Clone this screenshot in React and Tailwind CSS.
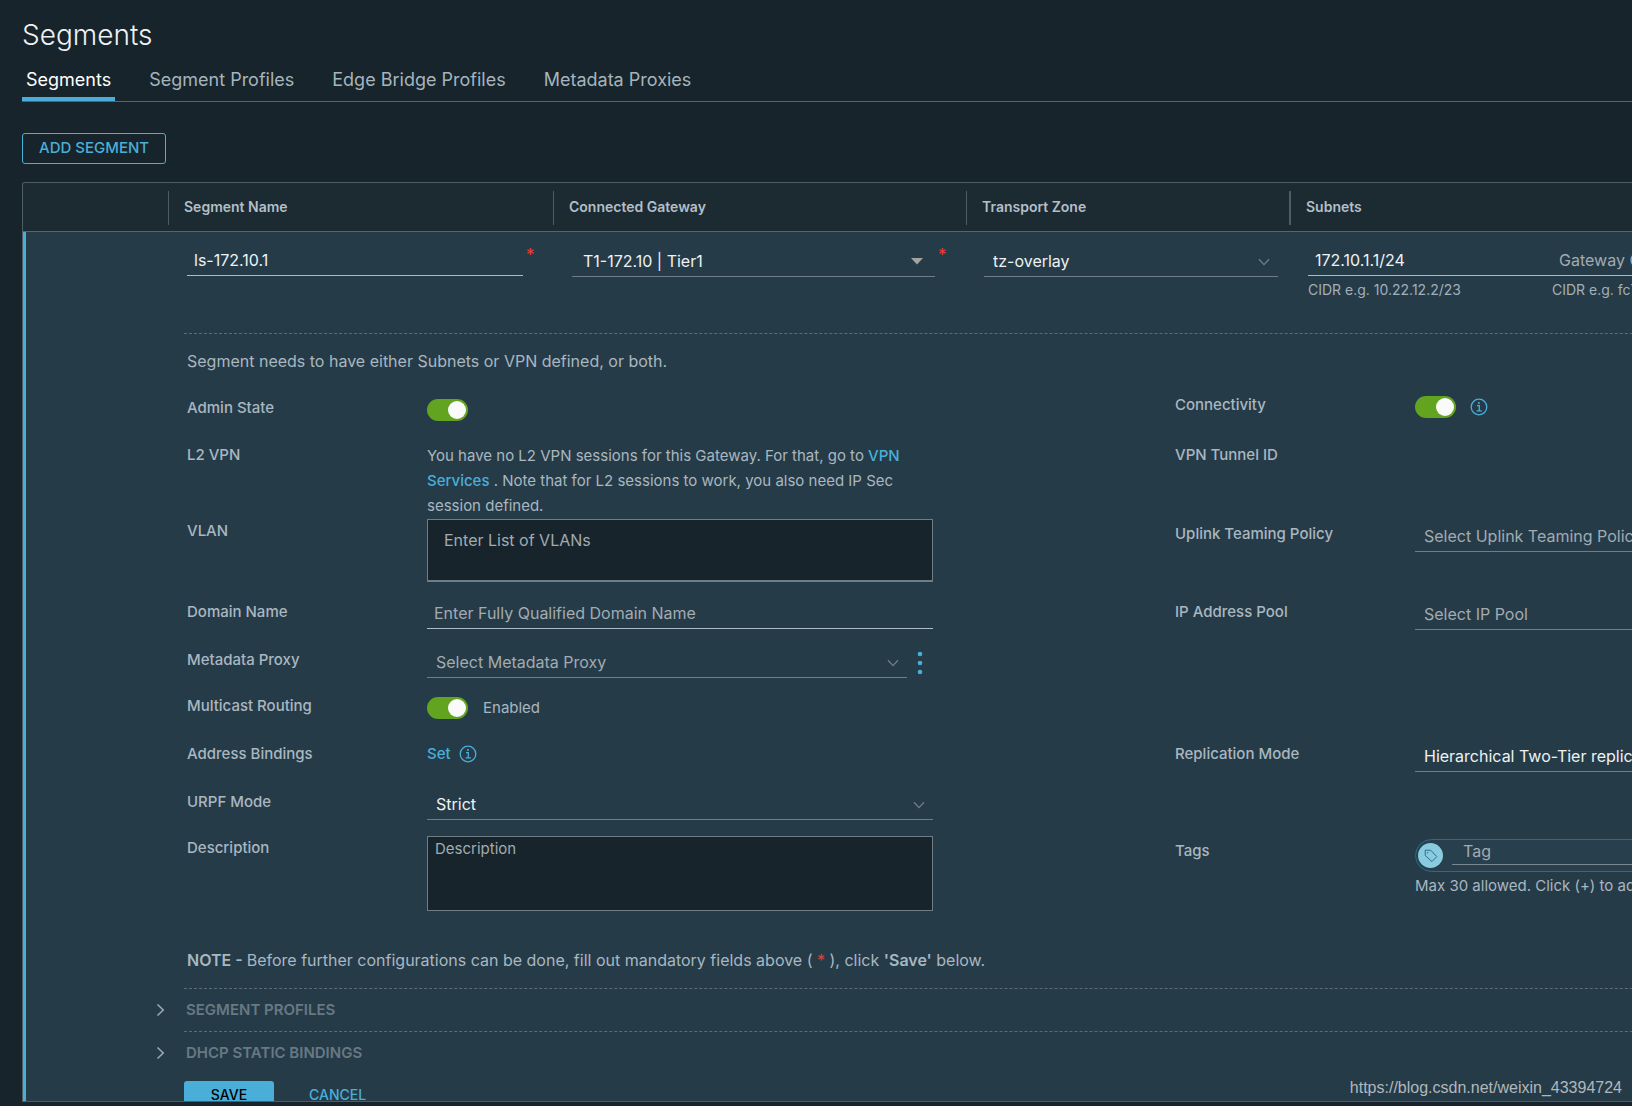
import React, { useState } from 'react';

const TABS = ['Segments', 'Segment Profiles', 'Edge Bridge Profiles', 'Metadata Proxies'];

const ChevronDown = ({ className }) => (
    <svg className={className} width="12" height="8" viewBox="0 0 12 8" fill="none" stroke="currentColor" strokeWidth="1.3">
        <path d="M1 1.2 L6 6.6 L11 1.2" />
    </svg>
);

const ChevronRight = () => (
    <svg width="9" height="14" viewBox="0 0 9 14" fill="none" stroke="currentColor" strokeWidth="1.6">
        <path d="M1.5 1.5 L7.2 7 L1.5 12.5" />
    </svg>
);

const InfoIcon = () => (
    <svg width="18" height="18" viewBox="0 0 18 18" fill="none" stroke="#49afd9" strokeWidth="1.3">
        <circle cx="9" cy="9" r="7.8" />
        <circle cx="8.9" cy="4.9" r="1" fill="#49afd9" stroke="none" />
        <path d="M7 7.7 H9.3 V12.8 M6.6 12.9 H11.8" />
    </svg>
);

const TagIcon = () => (
    <svg width="14" height="14" viewBox="0 0 14 14" fill="none" stroke="#2d6f8c" strokeWidth="1">
        <path d="M1.2 1.2 H6.6 L12.8 7.6 L7.9 12.6 L1.2 6.4 Z" strokeLinejoin="round" />
        <circle cx="3.7" cy="3.7" r="0.7" fill="#2d6f8c" stroke="none" />
    </svg>
);

const Required = () => <span className="text-[17px] leading-4 text-[#e0423a]" aria-hidden="true">*</span>;

const Toggle = ({ id, label }) => {
    const [on, setOn] = useState(true);
    return (
        <input
            id={id}
            type="checkbox"
            role="switch"
            aria-label={label}
            checked={on}
            onChange={e => setOn(e.target.checked)}
            className="block h-[22px] w-[41px] shrink-0 cursor-pointer appearance-none rounded-full bg-[#62a420] p-[2px] before:block before:size-[18px] before:translate-x-[19px] before:rounded-full before:bg-[#fafafa] not-checked:bg-[#565656] not-checked:before:translate-x-0"
        />
    );
};

// Underlined drop-down; the arrow sits over the native control
const Select = ({ id, label, text, muted, caret }) => (
    <div className="relative w-full">
        <select
            id={id}
            aria-label={label}
            className={`block h-[30px] w-full appearance-none border-b border-[#707d86] bg-transparent pr-8 pb-[2px] text-base ${caret ? 'pl-[11px]' : 'pl-[9px]'} ${muted ? 'text-[#a2abb1]' : 'text-[#eef2f4]'}`}
        >
            <option>{text}</option>
        </select>
        {caret ? (
            <svg className="pointer-events-none absolute top-[11px] right-3 text-[#a3a3a3]" width="12" height="7" viewBox="0 0 12 7">
                <path d="M0 0 H12 L6 6.5 Z" fill="currentColor" />
            </svg>
        ) : (
            <ChevronDown className="pointer-events-none absolute top-[11px] right-2 text-[#6f7f88]" />
        )}
    </div>
);

const TextInput = ({ id, label, value, placeholder }) => (
    <input
        id={id}
        type="text"
        aria-label={label}
        defaultValue={value}
        placeholder={placeholder}
        className="block h-[29px] w-full border-b border-[#adbbc4] bg-transparent px-[7px] pb-[2px] text-base text-[#eef2f4] outline-none placeholder:text-[#a2abb1]"
    />
);

const Label = ({ htmlFor, children }) => (
    <label htmlFor={htmlFor} className="block w-60 shrink-0 text-[15px] leading-6 font-medium text-[#a9b7c0]">
        {children}
    </label>
);

// One line of the form: left field, and optionally a right field
const Row = ({ left, right, className }) => (
    <div className={`flex ${className}`}>
        <div className="flex w-[988px] shrink-0 items-start">{left}</div>
        <div className="flex min-w-[748px] flex-1 items-start">{right}</div>
    </div>
);

const Accordion = ({ title }) => (
    <div className="flex h-[42px] items-center">
        <button type="button" className="-ml-7 flex items-center gap-[21px] text-[#677983]">
            <span className="text-[#9aa9b2]"><ChevronRight /></span>
            <span className="text-[15px] font-semibold">{title}</span>
        </button>
    </div>
);

const Header = ({ children, last }) => (
    <th className="border-b border-[#56666f] p-0 pt-2 pb-1.5 text-left">
        <div className={`h-[34px] border-[#4d5c65] pl-[15px] text-sm leading-8 font-semibold text-[#b3bfc7] ${last ? 'border-l-2' : 'border-l'}`}>
            {children}
        </div>
    </th>
);

const SegmentForm = () => (
    <div className="ml-[158px] border-t border-dashed border-[#5c6c76]">
        <div className="pl-[3px] text-[#a9b7c0]">
            <p className="pt-[15px] text-base leading-6">Segment needs to have either Subnets or VPN defined, or both.</p>

            <div className="pt-5">
                <Row
                    className="h-[50px]"
                    left={
                        <div className="flex pt-[3px]">
                            <Label htmlFor="admin-state">Admin State</Label>
                            <div className="pt-[3px]"><Toggle id="admin-state" /></div>
                        </div>
                    }
                    right={
                        <>
                            <Label htmlFor="connectivity">Connectivity</Label>
                            <div className="flex items-center gap-[14px] pt-[3px]">
                                <Toggle id="connectivity" />
                                <button type="button" aria-label="Connectivity info"><InfoIcon /></button>
                            </div>
                        </>
                    }
                />
                <Row
                    className="h-[76px]"
                    left={
                        <>
                            <span className="w-60 shrink-0 text-[15px] leading-6 font-medium">L2 VPN</span>
                            <p className="w-[506px] text-[15px] leading-[25px]">
                                You have no L2 VPN sessions for this Gateway. For that, go to{' '}
                                <a href="#vpn" className="font-medium text-[#49afd9]">VPN Services</a> . Note that for L2
                                sessions to work, you also need IP Sec session defined.
                            </p>
                        </>
                    }
                    right={<span className="w-60 shrink-0 text-[15px] leading-6 font-medium">VPN Tunnel ID</span>}
                />
                <Row
                    className="h-[81px]"
                    left={
                        <>
                            <Label htmlFor="vlan">VLAN</Label>
                            <textarea
                                id="vlan"
                                placeholder="Enter List of VLANs"
                                className="h-[63px] w-[506px] resize-none border border-b-2 border-[#707d86] bg-[#17242b] px-4 py-2 text-base placeholder:text-[#a2abb1]"
                            />
                        </>
                    }
                    right={
                        <div className="flex w-full pt-[3px]">
                            <Label htmlFor="uplink">Uplink Teaming Policy</Label>
                            <Select id="uplink" text="Select Uplink Teaming Policy" muted />
                        </div>
                    }
                />
                <Row
                    className="h-12"
                    left={
                        <>
                            <Label htmlFor="domain">Domain Name</Label>
                            <div className="w-[506px]"><TextInput id="domain" placeholder="Enter Fully Qualified Domain Name" /></div>
                        </>
                    }
                    right={
                        <>
                            <Label htmlFor="ip-pool">IP Address Pool</Label>
                            <Select id="ip-pool" text="Select IP Pool" muted />
                        </>
                    }
                />
                <Row
                    className="h-[46px]"
                    left={
                        <>
                            <Label htmlFor="metadata">Metadata Proxy</Label>
                            <div className="flex w-[506px] items-center">
                                <Select id="metadata" text="Select Metadata Proxy" muted />
                                <button type="button" aria-label="More actions" className="mx-2.5 shrink-0">
                                    <svg width="6" height="24" viewBox="0 0 6 24" fill="#49afd9">
                                        <circle cx="3" cy="3" r="2.3" />
                                        <circle cx="3" cy="12" r="2.3" />
                                        <circle cx="3" cy="21" r="2.3" />
                                    </svg>
                                </button>
                            </div>
                        </>
                    }
                />
                <Row
                    className="h-12"
                    left={
                        <>
                            <Label htmlFor="multicast">Multicast Routing</Label>
                            <div className="flex items-center gap-[15px] pt-[3px] text-[15px]">
                                <Toggle id="multicast" />
                                <span>Enabled</span>
                            </div>
                        </>
                    }
                />
                <Row
                    className="h-12"
                    left={
                        <>
                            <span className="w-60 shrink-0 text-[15px] leading-6 font-medium">Address Bindings</span>
                            <div className="flex items-center gap-2 text-[15px] leading-6">
                                <a href="#bindings" className="font-medium text-[#49afd9]">Set</a>
                                <InfoIcon />
                            </div>
                        </>
                    }
                    right={
                        <>
                            <Label htmlFor="replication">Replication Mode</Label>
                            <Select id="replication" text="Hierarchical Two-Tier replication" />
                        </>
                    }
                />
                <Row
                    className="h-[46px]"
                    left={
                        <>
                            <Label htmlFor="urpf">URPF Mode</Label>
                            <div className="w-[506px]"><Select id="urpf" text="Strict" /></div>
                        </>
                    }
                />
                <Row
                    className="h-[110px]"
                    left={
                        <>
                            <Label htmlFor="description">Description</Label>
                            <textarea
                                id="description"
                                placeholder="Description"
                                className="h-[75px] w-[506px] resize-none border border-[#707d86] bg-[#17242b] px-[7px] text-[15px] leading-6 placeholder:text-[#a2abb1]"
                            />
                        </>
                    }
                    right={
                        <div className="flex w-full pt-[3px]">
                            <Label htmlFor="tag">Tags</Label>
                            <div className="w-full">
                                <div className="flex h-[33px] items-center gap-[9px] rounded-full border border-[#2f6a88] bg-[#283f4d] pl-[2px]">
                                    <span className="flex size-[25px] shrink-0 items-center justify-center rounded-full bg-[#89cbdf]">
                                        <TagIcon />
                                    </span>
                                    <input
                                        id="tag"
                                        type="text"
                                        placeholder="Tag"
                                        className="mb-2 h-[26px] w-full border-b border-[#7b8790] bg-transparent pl-[11px] text-base placeholder:text-[#a2abb1]"
                                    />
                                </div>
                                <p className="pt-1 text-[15px] leading-5 whitespace-nowrap">Max 30 allowed. Click (+) to add.</p>
                            </div>
                        </div>
                    }
                />
            </div>

            <p className="pt-[2px] pb-4 text-base leading-6">
                <b className="font-semibold">NOTE - </b>Before further configurations can be done, fill out mandatory fields above (
                <span className="text-[#e0423a]"> * </span>), click <b className="font-semibold">'Save'</b> below.
            </p>
        </div>

        <div className="border-t border-dashed border-[#5c6c76]">
            <Accordion title="SEGMENT PROFILES" />
        </div>
        <div className="border-t border-dashed border-[#5c6c76]">
            <Accordion title="DHCP STATIC BINDINGS" />
        </div>

        <div className="flex gap-[35px] pt-[7px] text-sm leading-7 font-medium">
            <button type="button" className="w-[90px] rounded-[3px] bg-[#49afd9] pb-1 text-black">SAVE</button>
            <button type="button" className="pb-1 text-[#49afd9]">CANCEL</button>
        </div>
    </div>
);

const App = () => {
    const [tab, setTab] = useState('Segments');

    return (
        <div className="flex h-screen flex-col overflow-hidden bg-[#17242b] pl-[22px] font-['Inter',sans-serif] text-[#adbbc4]">
            <h1 className="pt-[19px] text-[28px] leading-8 font-light text-[#eef2f4]">Segments</h1>

            <nav className="mt-[11px] flex shrink-0 gap-[30px] border-b border-[#56646c]">
                {TABS.map(name => (
                    <button
                        key={name}
                        type="button"
                        onClick={() => setTab(name)}
                        className={`h-[39px] border-b-4 px-1 text-lg ${tab === name ? 'border-[#49afd9] text-white' : 'border-transparent text-[#a5b4bd]'}`}
                    >
                        {name}
                    </button>
                ))}
            </nav>

            <div className="shrink-0 pt-[31px] pb-[18px]">
                <button type="button" className="h-[31px] rounded-[3px] border border-[#49afd9] px-4 text-[15px] font-medium text-[#49afd9]">
                    ADD SEGMENT
                </button>
            </div>

            <div className="mb-1 min-h-0 flex-1 overflow-hidden rounded-tl-[3px] border-y border-l border-[#4d5c65] bg-[#263b48]">
                <table className="w-full min-w-[1900px] table-fixed border-separate border-spacing-0">
                    <colgroup>
                        <col className="w-[145px]" />
                        <col className="w-[385px]" />
                        <col className="w-[413px]" />
                        <col className="w-[323px]" />
                        <col />
                    </colgroup>
                    <thead>
                        <tr className="bg-[#1c2a32]">
                            <td className="border-b border-[#56666f]" />
                            <Header>Segment Name</Header>
                            <Header>Connected Gateway</Header>
                            <Header>Transport Zone</Header>
                            <Header last>Subnets</Header>
                        </tr>
                    </thead>
                    <tbody>
                        <tr className="h-[101px] align-top">
                            <td className="border-l-3 border-[#49afd9]" />
                            <td className="pt-[15px] pl-[19px]">
                                <div className="flex gap-[3px]">
                                    <div className="w-[336px]"><TextInput label="Segment Name" value="ls-172.10.1" /></div>
                                    <Required />
                                </div>
                            </td>
                            <td className="pt-[15px] pl-[19px]">
                                <div className="flex gap-[3px]">
                                    <div className="w-[363px]"><Select label="Connected Gateway" text="T1-172.10 | Tier1" caret /></div>
                                    <Required />
                                </div>
                            </td>
                            <td className="pt-[15px] pr-[11px] pl-[18px]">
                                <Select label="Transport Zone" text="tz-overlay" />
                            </td>
                            <td className="pt-[15px] pl-[19px]">
                                <div className="flex text-[#a2b0b9]">
                                    <div className="w-[244px] shrink-0">
                                        <TextInput label="Subnet gateway IPv4" value="172.10.1.1/24" />
                                        <p className="pt-1 text-sm leading-5">CIDR e.g. 10.22.12.2/23</p>
                                    </div>
                                    <div className="flex-1">
                                        <TextInput label="Subnet gateway IPv6" placeholder="Gateway CIDR IPv6" />
                                        <p className="pt-1 text-sm leading-5">CIDR e.g. fc7e:f206:db42::1/48</p>
                                    </div>
                                </div>
                            </td>
                        </tr>
                        <tr>
                            <td colSpan={5} className="border-l-3 border-[#49afd9] p-0">
                                <SegmentForm />
                            </td>
                        </tr>
                    </tbody>
                </table>
            </div>

            <span className="absolute right-2.5 bottom-1.5 font-['Liberation_Sans',sans-serif] text-base text-[#b0b8bc]">
                https://blog.csdn.net/weixin_43394724
            </span>
        </div>
    );
};

export default App;
